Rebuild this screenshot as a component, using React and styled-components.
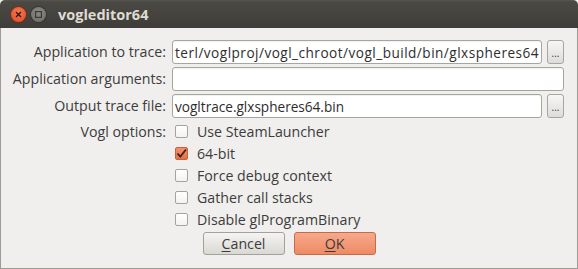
import React from 'react';
import styled, { createGlobalStyle } from 'styled-components';

const Global = createGlobalStyle`
  html, body {
    margin: 0;
    padding: 0;
    background: #f0efed;
  }
  body {
    font-family: "Open Sans", "DejaVu Sans", sans-serif;
  }
`;

const Window = styled.div`
  width: 578px;
  height: 269px;
  display: flex;
  flex-direction: column;
  box-sizing: border-box;
  overflow: hidden;
`;

const TitleBar = styled.div`
  height: 28px;
  flex: none;
  display: flex;
  align-items: center;
  padding-left: 11px;
  gap: 5px;
  border-radius: 5px 5px 0 0;
  background: linear-gradient(#57564f 0, #4a4944 2px, #3e3d39 100%);
  box-sizing: border-box;
`;

const WinButton = styled.div`
  width: 15px;
  height: 15px;
  border-radius: 50%;
  display: flex;
  align-items: center;
  justify-content: center;
  background: ${p => (p.$close ? 'radial-gradient(circle at 50% 35%, #f27a52, #df4a20)' : 'radial-gradient(circle at 50% 35%, #8a8983, #6c6b66)')};
  box-shadow: 0 0 0 1px ${p => (p.$close ? '#7c2a14' : '#363530')};
`;

const Title = styled.div`
  margin-left: 7px;
  color: #dfdbd2;
  font-weight: 700;
  font-size: 14.5px;
`;

const Body = styled.div`
  flex: 1;
  display: flex;
  flex-direction: column;
  border: 1px solid #9d9b96;
  border-top: none;
  background: #f0efed;
  padding: 12px 13px 0 8px;
`;

const Form = styled.div`
  display: grid;
  grid-template-columns: 157px minmax(0, 1fr);
  column-gap: 6px;
  row-gap: 3px;
  color: #3c3c3c;
  font-size: 14.2px;
`;

const Label = styled.div`
  text-align: right;
  height: ${p => (p.$short ? '22px' : '24px')};
  line-height: ${p => (p.$short ? '22px' : '24px')};
  white-space: nowrap;
`;

const FieldRow = styled.div`
  display: flex;
  gap: 5px;
  height: 24px;
  min-width: 0;
`;

const Field = styled.div`
  flex: 1;
  min-width: 0;
  box-sizing: border-box;
  height: 24px;
  background: #fff;
  border: 1px solid #a7a5a0;
  border-radius: 3px;
  box-shadow: inset 0 1px 1px rgba(0, 0, 0, 0.06);
  display: flex;
  align-items: center;
  padding: 0 2px;
  overflow: hidden;
  white-space: nowrap;
  font-size: 13.6px;
  letter-spacing: ${p => (p.$wide ? '0.48px' : '0')};
  color: #2e2e2e;
`;

const Browse = styled.div`
  width: 17px;
  flex: none;
  box-sizing: border-box;
  border: 1px solid #a7a5a0;
  border-radius: 3px;
  background: linear-gradient(#f7f6f4, #dedcd8);
  display: flex;
  align-items: flex-end;
  justify-content: center;
  padding-bottom: 5px;
  font-size: 10px;
  line-height: 10px;
  color: #3c3c3c;
`;

const Options = styled.div`
  display: flex;
  flex-direction: column;
  margin-top: -1px;
`;

const OptionRow = styled.label`
  display: flex;
  align-items: center;
  height: 22px;
  gap: 9px;
  padding-left: 3px;
`;

const Box = styled.span`
  width: 13px;
  height: 13px;
  box-sizing: border-box;
  border-radius: 2px;
  border: 1px solid ${p => (p.$checked ? '#c4623e' : '#a5a39f')};
  background: ${p => (p.$checked ? 'linear-gradient(#f2906b, #e4714a)' : 'linear-gradient(#ffffff, #f3f2f0)')};
  display: flex;
  align-items: center;
  justify-content: center;
`;

const Buttons = styled.div`
  display: flex;
  justify-content: center;
  gap: 9px;
  margin-top: 2px;
  padding-left: 5px;
`;

const Button = styled.div`
  width: 82px;
  height: 23px;
  box-sizing: border-box;
  border-radius: 3px;
  border: 1px solid ${p => (p.$primary ? '#c66a49' : '#a3a19c')};
  background: ${p => (p.$primary ? 'linear-gradient(#f7a98b, #ee8a64)' : 'linear-gradient(#f5f4f2, #dad8d3)')};
  display: flex;
  align-items: center;
  justify-content: center;
  font-size: 14.2px;
  color: #3c3c3c;
  u {
    text-decoration-thickness: 1px;
    text-underline-offset: 2px;
  }
`;

const Check = () => (
  <svg width="11" height="11" viewBox="0 0 11 11">
    <path d="M1.5 5.5 L4.3 8.6 L10 1.5" fill="none" stroke="#3e2216" strokeWidth="1.8" />
  </svg>
);

const options = [
  ['Use SteamLauncher', false],
  ['64-bit', true],
  ['Force debug context', false],
  ['Gather call stacks', false],
  ['Disable glProgramBinary', false],
];

export default function App() {
  return (
    <Window>
      <Global />
      <TitleBar>
        <WinButton $close>
          <svg width="7" height="7" viewBox="0 0 7 7">
            <path d="M1 1 L6 6 M6 1 L1 6" stroke="#3b1408" strokeWidth="1.4" />
          </svg>
        </WinButton>
        <WinButton>
          <svg width="7" height="7" viewBox="0 0 7 7">
            <rect x="0.6" y="0.6" width="5.8" height="5.8" fill="none" stroke="#3b3a36" strokeWidth="1.2" />
          </svg>
        </WinButton>
        <Title>vogleditor64</Title>
      </TitleBar>
      <Body>
        <Form>
          <Label>Application to trace:</Label>
          <FieldRow>
            <Field $wide>terl/voglproj/vogl_chroot/vogl_build/bin/glxspheres64</Field>
            <Browse>...</Browse>
          </FieldRow>
          <Label>Application arguments:</Label>
          <FieldRow>
            <Field />
          </FieldRow>
          <Label>Output trace file:</Label>
          <FieldRow>
            <Field>vogltrace.glxspheres64.bin</Field>
            <Browse>...</Browse>
          </FieldRow>
          <Label $short>Vogl options:</Label>
          <Options>
            {options.map(([text, checked]) => (
              <OptionRow key={text}>
                <Box $checked={checked}>{checked && <Check />}</Box>
                {text}
              </OptionRow>
            ))}
          </Options>
        </Form>
        <Buttons>
          <Button><span><u>C</u>ancel</span></Button>
          <Button $primary><span><u>O</u>K</span></Button>
        </Buttons>
      </Body>
    </Window>
  );
}
